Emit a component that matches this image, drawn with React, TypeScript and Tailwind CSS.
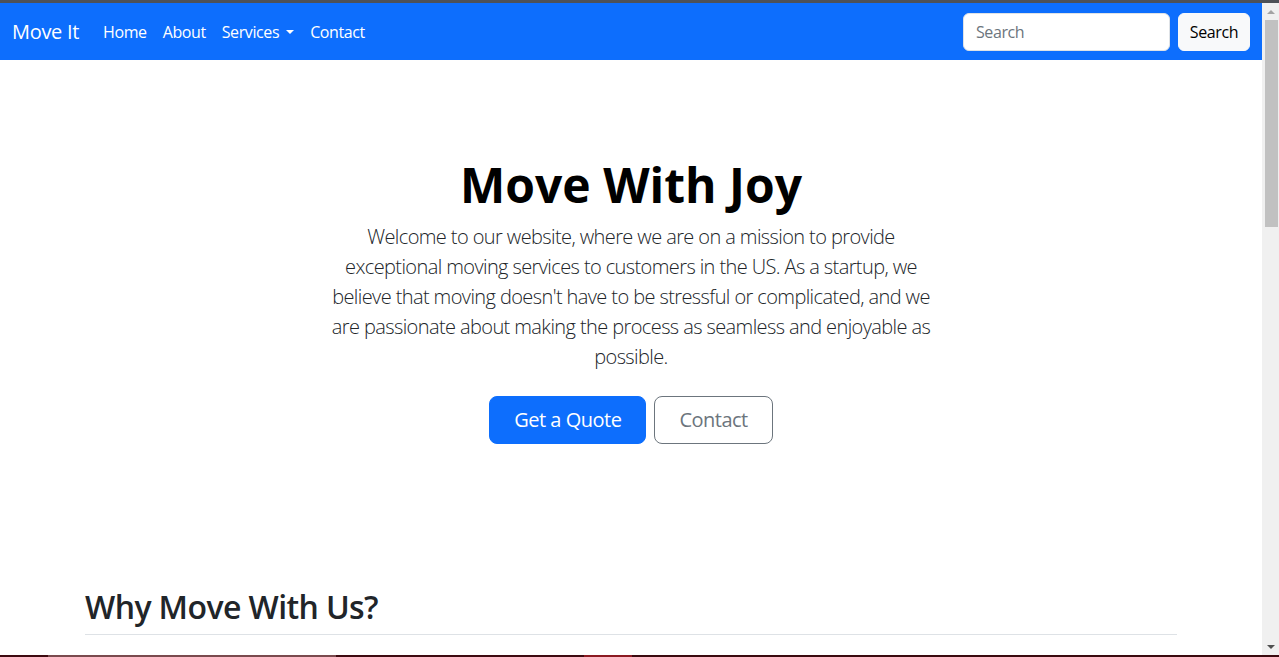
import React from 'react';

const font = { fontFamily: '"Open Sans", "Noto Sans", sans-serif' };

const NavBar: React.FC = () => {
  return (
    <nav className="h-[57px] bg-[#0d6efd] flex items-center px-3">
      <a href="#" className="text-white text-[20px] leading-[30px] tracking-[-0.3px] mr-4">Move It</a>
      <ul className="flex items-center text-[16px] tracking-[-0.4px]">
        <li><a href="#" className="block px-2 text-white">Home</a></li>
        <li><a href="#" className="block px-2 text-white">About</a></li>
        <li>
          <a href="#" className="flex items-center px-2 text-white">
            Services
            <span className="ml-[7px] inline-block w-0 h-0 border-l-[4px] border-r-[4px] border-t-[4px] border-l-transparent border-r-transparent border-t-white" />
          </a>
        </li>
        <li><a href="#" className="block px-2 text-white">Contact</a></li>
      </ul>
      <form className="ml-auto flex items-center" onSubmit={(e) => e.preventDefault()}>
        <input
          type="search"
          placeholder="Search"
          className="w-[207px] h-[38px] mr-[8px] px-3 rounded-[6px] border border-[#dee2e6] bg-white text-[16px] tracking-[-0.4px] text-[#212529] placeholder:text-[#6c757d] outline-none"
          aria-label="Search"
        />
        <button type="submit" className="w-[72px] h-[38px] rounded-[6px] bg-[#f8f9fa] border border-[#f8f9fa] text-[16px] tracking-[-0.4px] text-black">
          Search
        </button>
      </form>
    </nav>
  );
};

const Hero: React.FC = () => {
  return (
    <section className="pt-[96px] pb-[96px] text-center">
      <h1 className="text-[48px] leading-[1.2] font-bold text-black mb-2">Move With Joy</h1>
      <div className="w-[607px] mx-auto">
        <p className="text-[20px] leading-[30px] font-light tracking-[-0.6px] text-[#212529] mb-6">
          Welcome to our website, where we are on a mission to provide exceptional moving services to customers in the US. As a startup, we believe that moving doesn't have to be stressful or complicated, and we are passionate about making the process as seamless and enjoyable as possible.
        </p>
        <div className="flex justify-center gap-2 text-[20px] tracking-[-0.5px]">
          <button className="h-[48px] px-6 rounded-[8px] bg-[#0d6efd] border border-[#0d6efd] text-white">Get a Quote</button>
          <button className="h-[48px] px-6 rounded-[8px] bg-white border border-[#6c757d] text-[#6c757d]">Contact</button>
        </div>
      </div>
    </section>
  );
};

const Scrollbar: React.FC = () => (
  <div className="w-[17px] bg-[#f0f0f0] flex flex-col items-center">
    <div className="h-[17px] flex items-center justify-center">
      <span className="w-0 h-0 border-l-[4px] border-r-[4px] border-b-[4px] border-l-transparent border-r-transparent border-b-[#a3a3a3]" />
    </div>
    <div className="w-[13px] ml-[1px] h-[207px] bg-[#c1c1c1]" />
    <div className="flex-1" />
    <div className="h-[17px] flex items-center justify-center">
      <span className="w-0 h-0 border-l-[4px] border-r-[4px] border-t-[4px] border-l-transparent border-r-transparent border-t-[#505050]" />
    </div>
  </div>
);

export default function App() {
  return (
    <div className="h-[657px] flex flex-col overflow-hidden bg-white" style={font}>
      <div className="h-[3px] bg-[#4d5157]" />
      <div className="flex-1 flex min-h-0">
        <main className="flex-1 min-w-0 overflow-hidden">
          <NavBar />
          <Hero />
          <div className="w-[1140px] mx-auto px-6 py-12">
            <h2 className="text-[32px] leading-[1.2] font-semibold tracking-[-0.6px] text-[#212529] pb-2 border-b border-[#dee2e6]">Why Move With Us?</h2>
          </div>
        </main>
        <Scrollbar />
      </div>
      <div className="h-[2px] flex">
        <div className="w-[48px] bg-[#3d0a10]" />
        <div className="w-[288px] bg-[#7a4a4e]" />
        <div className="w-[248px] bg-[#3d0a10]" />
        <div className="w-[48px] bg-[#8b1a22]" />
        <div className="flex-1 bg-[#3a0a0f]" />
      </div>
    </div>
  );
}
